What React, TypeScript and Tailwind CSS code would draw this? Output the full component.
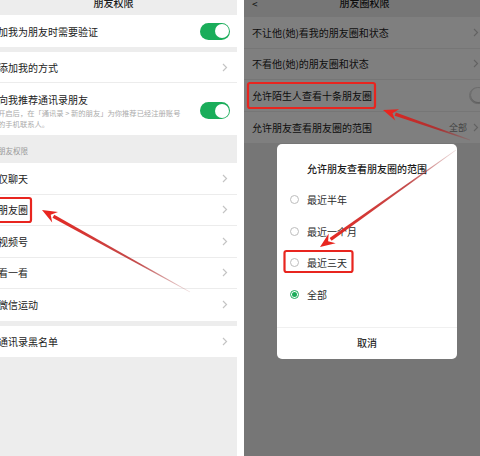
import type { ReactNode } from 'react';

const font = { fontFamily: '"Noto Sans CJK SC", "Noto Sans", sans-serif' };

function Chevron({ color = '#c4c4c4' }: { color?: string }) {
  return (
    <svg width="6" height="9" viewBox="0 0 6 9" className="shrink-0">
      <polyline points="1,1 4.5,4.5 1,8" fill="none" stroke={color} strokeWidth="1.2" />
    </svg>
  );
}

function Toggle({ on }: { on: boolean }) {
  return on ? (
    <div className="w-[30px] h-[17px] rounded-full bg-[#1aad5a] flex items-center justify-end pr-[1.5px] shrink-0">
      <div className="w-[14px] h-[14px] rounded-full bg-white" />
    </div>
  ) : (
    <div className="w-[30px] h-[17px] rounded-full bg-[#e9e9e9] border border-[#dcdcdc] flex items-center pl-[1px] shrink-0">
      <div className="w-[14px] h-[14px] rounded-full bg-white shadow-[0_1px_2px_rgba(0,0,0,0.25)]" />
    </div>
  );
}

function LeftRow({ label, last, children }: { label: string; last?: boolean; children?: ReactNode }) {
  return (
    <div className={`h-[31.5px] bg-white flex items-center justify-between pr-[9px] ${last ? '' : 'border-b border-[#ececec]'}`}>
      <span className="ml-[-2px] text-[10px] text-[#1b1b1b]">{label}</span>
      {children ?? <Chevron />}
    </div>
  );
}

function Arrow({ tail, tip, id }: { tail: [number, number]; tip: [number, number]; id: string }) {
  const dx = tip[0] - tail[0];
  const dy = tip[1] - tail[1];
  const len = Math.hypot(dx, dy);
  const ux = dx / len;
  const uy = dy / len;
  const nx = -uy;
  const ny = ux;
  const bx = tip[0] - ux * 13;
  const by = tip[1] - uy * 13;
  const p = (x: number, y: number) => `${x.toFixed(1)},${y.toFixed(1)}`;
  const shaft = [
    p(tail[0] + nx * 0.4, tail[1] + ny * 0.4),
    p(bx + nx * 1.7, by + ny * 1.7),
    p(bx - nx * 1.7, by - ny * 1.7),
    p(tail[0] - nx * 0.4, tail[1] - ny * 0.4),
  ].join(' ');
  const head = [
    p(tip[0], tip[1]),
    p(bx + nx * 6 - ux * 2, by + ny * 6 - uy * 2),
    p(bx + ux * 3, by + uy * 3),
    p(bx - nx * 6 - ux * 2, by - ny * 6 - uy * 2),
  ].join(' ');
  return (
    <g>
      <defs>
        <linearGradient id={id} gradientUnits="userSpaceOnUse" x1={tail[0]} y1={tail[1]} x2={tip[0]} y2={tip[1]}>
          <stop offset="0" stopColor="#9a2a2a" stopOpacity="0.15" />
          <stop offset="0.35" stopColor="#b52020" stopOpacity="0.8" />
          <stop offset="1" stopColor="#e8251f" />
        </linearGradient>
      </defs>
      <polygon points={shaft} fill={`url(#${id})`} />
      <polygon points={head} fill="#e8251f" />
    </g>
  );
}

export default function App() {
  return (
    <div className="relative w-[480px] h-[456px] bg-white flex overflow-hidden" style={font}>
      {/* left screenshot */}
      <div className="w-[237px] h-full bg-[#ededed] flex flex-col overflow-hidden">
        <div className="h-[15px] flex justify-center items-start">
          <span className="mt-[-5px] ml-[-10px] text-[10px] font-medium text-[#1b1b1b]">朋友权限</span>
        </div>
        <div className="h-[32px] bg-white flex items-center justify-between pr-[7px]">
          <span className="ml-[-2px] text-[10px] text-[#1b1b1b]">加我为朋友时需要验证</span>
          <Toggle on />
        </div>
        <div className="h-[5px]" />
        <div className="h-[31px] bg-white flex items-center justify-between pr-[9px] border-b border-[#ececec]">
          <span className="ml-[-2px] text-[10px] text-[#1b1b1b]">添加我的方式</span>
          <Chevron />
        </div>
        <div className="h-[52px] bg-white flex items-start justify-between pr-[7px] pt-[10px]">
          <div className="flex flex-col ml-[-2px]">
            <span className="text-[10px] leading-[14px] text-[#1b1b1b]">向我推荐通讯录朋友</span>
            <span className="text-[7.3px] leading-[12px] text-[#ababab] whitespace-nowrap">开启后，在「通讯录 &gt; 新的朋友」为你推荐已经注册账号</span>
            <span className="text-[7.3px] leading-[11px] text-[#ababab]">的手机联系人。</span>
          </div>
          <div className="mt-[9px]">
            <Toggle on />
          </div>
        </div>
        <div className="h-[28px] flex items-end pb-[7px]">
          <span className="ml-[-2px] text-[7.5px] text-[#9a9a9a]">朋友权限</span>
        </div>
        <LeftRow label="仅聊天" />
        <LeftRow label="朋友圈" />
        <LeftRow label="视频号" />
        <LeftRow label="看一看" />
        <LeftRow label="微信运动" last />
        <div className="h-[5px]" />
        <LeftRow label="通讯录黑名单" last />
      </div>

      <div className="w-[7px] shrink-0" />

      {/* right screenshot */}
      <div className="relative w-[236px] h-full bg-[#ededed] flex flex-col overflow-hidden">
        <div className="h-[17px] relative flex justify-center items-start">
          <span className="absolute left-[8px] top-[-4px] text-[10px] text-[#1b1b1b]">&lt;</span>
          <span className="mt-[-5px] ml-[5px] text-[10px] font-medium text-[#1b1b1b]">朋友圈权限</span>
        </div>
        {['不让他(她)看我的朋友圈和状态', '不看他(她)的朋友圈和状态'].map((t) => (
          <div key={t} className="h-[31.5px] bg-white flex items-center justify-between pl-[8px] pr-[1px] border-b border-[#ececec]">
            <span className="text-[10px] text-[#1b1b1b]">{t}</span>
            <Chevron />
          </div>
        ))}
        <div className="h-[31.5px] bg-white flex items-center justify-between pl-[8px] border-b border-[#ececec]">
          <span className="text-[10px] text-[#1b1b1b]">允许陌生人查看十条朋友圈</span>
          <div className="mr-[-19px]">
            <Toggle on={false} />
          </div>
        </div>
        <div className="h-[31.5px] bg-white flex items-center justify-between pl-[8px] pr-[1px]">
          <span className="text-[10px] text-[#1b1b1b]">允许朋友查看朋友圈的范围</span>
          <div className="flex items-center gap-[6px]">
            <span className="text-[9px] text-[#8a8a8a]">全部</span>
            <Chevron />
          </div>
        </div>
        <div className="flex-1" />

        {/* dimming + dialog */}
        <div className="absolute inset-0 bg-black/[0.5]" />
        <div className="absolute left-[33px] top-[144px] w-[180px] h-[215px] bg-white rounded-[5px] flex flex-col">
          <div className="h-[34px] flex items-end justify-center pb-[2px]">
            <span className="text-[10px] font-medium text-[#1b1b1b]">允许朋友查看朋友圈的范围</span>
          </div>
          <div className="flex flex-col pl-[13px] pt-[6px]">
            {['最近半年', '最近一个月', '最近三天', '全部'].map((t, i) => (
              <div key={t} className="h-[31.6px] flex items-center gap-[8px]">
                {i === 3 ? (
                  <div className="w-[9px] h-[9px] rounded-full border border-[#1aad5a] flex items-center justify-center">
                    <div className="w-[5px] h-[5px] rounded-full bg-[#1aad5a]" />
                  </div>
                ) : (
                  <div className="w-[9px] h-[9px] rounded-full border border-[#bdbdbd]" />
                )}
                <span className="text-[10px] text-[#2b2b2b]">{t}</span>
              </div>
            ))}
          </div>
          <div className="flex-1" />
          <div className="h-[32px] border-t border-[#f0f0f0] flex items-center justify-center pb-[2px]">
            <span className="text-[10px] font-medium text-[#2b2b2b]">取消</span>
          </div>
        </div>
      </div>

      {/* annotations */}
      <svg className="absolute inset-0 pointer-events-none" width="480" height="456" viewBox="0 0 480 456">
        <rect x="-3" y="198" width="34" height="24" rx="2" fill="none" stroke="#e8251f" strokeWidth="2.2" />
        <rect x="248" y="83" width="127" height="25" rx="2" fill="none" stroke="#e8251f" strokeWidth="2.2" />
        <rect x="284.5" y="251" width="68" height="21" rx="2" fill="none" stroke="#e8251f" strokeWidth="2.2" />
        <Arrow id="a1" tail={[190, 292]} tip={[42, 210]} />
        <Arrow id="a2" tail={[470, 140]} tip={[383, 110]} />
        <Arrow id="a3" tail={[456, 150]} tip={[320, 247]} />
      </svg>
    </div>
  );
}
